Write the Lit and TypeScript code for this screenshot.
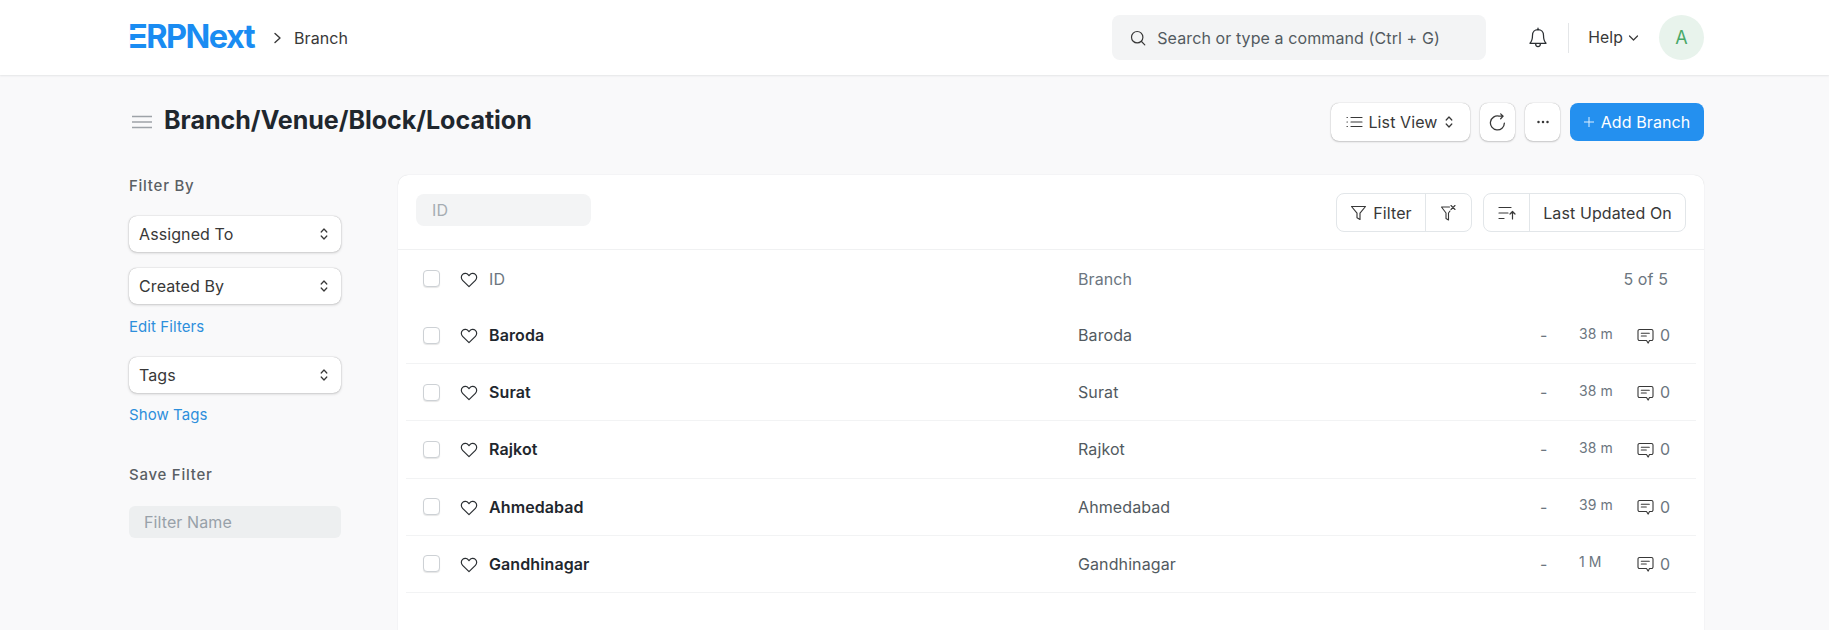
import { LitElement, html, css } from "lit";
import { customElement } from "lit/decorators.js";

const updown = html`<svg class="ud" width="12" height="16" viewBox="0 0 12 16" fill="none" stroke="#383838" stroke-width="1.25" stroke-linecap="round" stroke-linejoin="round"><path d="M3.2 6 6 3 8.800 6M3.200 10 6 13 8.800 10"/></svg>`;
const heart = html`<svg class="heart" width="18" height="16" viewBox="0 0 18 16" fill="none" stroke="#2b2f33" stroke-width="1.2" stroke-linejoin="round"><path d="M9 14.6 2.6 8.4C.9 6.7.9 4 2.6 2.4c1.7-1.5 4.3-1.3 5.7.4l.7.9.7-.9c1.4-1.7 4-1.9 5.7-.4 1.7 1.600 1.700 4.300 0 6z"/></svg>`;
const comment = html`<svg class="cicon" width="17" height="17" viewBox="0 0 17 17" fill="none" stroke="#383838" stroke-width="1.1" stroke-linejoin="round" stroke-linecap="round"><path d="M2.500 1.500h12a1.500 1.500 0 0 1 1.500 1.500v8a1.500 1.500 0 0 1-1.500 1.500h-2l-1.300 2.600-1.700-2.600h-7A1.500 1.500 0 0 1 1 11V3a1.500 1.500 0 0 1 1.500-1.500z"/><path d="M4.300 5.300h8M4.300 8h5"/></svg>`;

const rows = [
  ["Baroda", "38 m"],
  ["Surat", "38 m"],
  ["Rajkot", "38 m"],
  ["Ahmedabad", "39 m"],
  ["Gandhinagar", "1 M"],
];

@customElement("app-root")
export class AppRoot extends LitElement {
  static styles = css`
    :host { display: block; height: 630px; overflow: hidden; background: #f9f9fa; font-family: Inter, "Liberation Sans", sans-serif; font-size: 16px; letter-spacing: .1px; color: #383838; }
    * { box-sizing: border-box; }
    svg { display: block; flex: none; }
    .nav { height: 75px; background: #fff; box-shadow: 0 1px 2px rgba(25,39,52,.08), 0 0 1px rgba(25,39,52,.08); display: flex; align-items: center; padding: 0 125px 0 128px; }
    .logo { position: relative; font-size: 32.5px; font-weight: 700; color: #1a8cf2; letter-spacing: -1.55px; line-height: 1; width: 127px; }
    .logo::before, .logo::after { content: ""; position: absolute; left: 2px; width: 6px; height: 4px; background: #fff; }
    .logo::before { top: 9px; }
    .logo::after { top: 18.5px; }
    .crumb-arrow { margin-left: 18px; margin-right: 12px; }
    .spacer { flex: 1; }
    .search { width: 374px; height: 45px; background: #f3f4f5; border-radius: 8px; display: flex; align-items: center; padding-left: 18px; gap: 11px; color: #525a60; }
    .bell { margin-left: 42px; }
    .divider { width: 1px; height: 30px; background: #e4e6e8; margin: 0 19px 0 20px; }
    .help { display: flex; align-items: center; gap: 5px; color: #383838; font-size: 15.75px; }
    .avatar { width: 45px; height: 45px; border-radius: 50%; background: #e8f3ec; color: #48a868; font-size: 18px; display: flex; align-items: center; justify-content: center; margin-left: 20px; }

    .head { display: flex; align-items: center; height: 38px; margin: 28px 125px 0 132px; }
    .title { font-size: 25.1px; font-weight: 700; color: #1f272e; margin-left: 12px; padding-bottom: 3px; line-height: 1; letter-spacing: -.05px; }
    .btn { height: 38px; background: #fff; border-radius: 8px; box-shadow: 0 0 1px rgba(0,0,0,.35), 0 1px 2px rgba(0,0,0,.18); display: flex; align-items: center; justify-content: center; color: #383838; }
    .list-view { width: 139px; gap: 5px; }
    .icon-btn { width: 35px; margin-left: 10px; }
    .primary { width: 134px; margin-left: 10px; background: #2490ef; color: #fff; gap: 7px; box-shadow: none; }

    .main { display: flex; margin: 34px 125px 0 129px; align-items: flex-start; }
    .side { width: 212px; margin-right: 57px; flex: none; padding-top: 1px; }
    .side-label { font-size: 15px; font-weight: 500; letter-spacing: .75px; color: #5a5f64; line-height: 20px; }
    .sel { height: 35.5px; width: 212px; background: #fff; border-radius: 8px; box-shadow: 0 0 1px rgba(0,0,0,.35), 0 1px 3px rgba(0,0,0,.18); display: flex; align-items: center; justify-content: space-between; padding: 0 11px 0 10px; color: #383838; }
    .link { font-size: 15px; letter-spacing: .08px; color: #2d8fdc; line-height: 20px; }
    .fname { height: 32px; width: 212px; background: #edeff0; border-radius: 6px; display: flex; align-items: center; padding-left: 15px; color: #98a1a9; }
    .mt17 { margin-top: 16.5px; }
    .mt20 { margin-top: 20px; }
    .mt21 { margin-top: 20.5px; }
    .mt13 { margin-top: 13px; }
    .mt12 { margin-top: 12.5px; }
    .mt40 { margin-top: 40px; }
    .mt22 { margin-top: 21px; }

    .card { flex: 1; height: 520px; background: #fff; border-radius: 10px; box-shadow: 0 0 1px rgba(25,39,52,.2); }
    .toolbar { height: 75px; border-bottom: 1px solid #f0f1f2; display: flex; align-items: flex-start; padding: 18px 18px 0 18px; }
    .idin { width: 175px; height: 32px; background: #f3f4f5; border-radius: 8px; padding-left: 16px; display: flex; align-items: center; color: #a5acb2; margin-top: 1px; }
    .group { height: 39px; border: 1px solid #e2e6e9; border-radius: 8px; display: flex; align-items: center; color: #383838; }
    .g-filter { width: 136px; }
    .g-sort { width: 203px; margin-left: 11px; }
    .c-filter { width: 88px; }
    .c-sort { width: 45px; }
    .c-fill { flex: 1; }
    .cell { height: 100%; display: flex; align-items: center; justify-content: center; gap: 6px; }
    .cell + .cell { border-left: 1px solid #e2e6e9; }
    .row { height: 57.15px; margin: 0 8px; padding: 0 28px 0 17px; display: flex; align-items: center; }
    .row.body { border-bottom: 1px solid #f2f3f4; }
    .heart { margin-top: 2px; }
    .cicon { margin-top: 2px; }
    .check { width: 17px; height: 17px; border-radius: 4px; background: #fff; border: 1px solid #cdd1d5; box-shadow: 0 1px 1px rgba(0,0,0,.1); margin-right: 20px; flex: none; }
    .name { width: 589px; margin-left: 11px; color: #1f272e; font-weight: 600; }
    .row.hd .name { font-weight: 400; color: #6c7680; }
    .col2 { color: #525a60; }
    .row.hd .col2 { color: #6c7680; }
    .count { margin-left: auto; color: #6c7680; }
    .dash { margin-left: auto; width: 39px; color: #6c7680; }
    .age { width: 58px; font-size: 14px; color: #6c7680; margin-bottom: 4px; }
    .cmt { display: flex; align-items: center; gap: 6px; color: #6c7680; width: 31px; }
  `;

  render() {
    return html`
      <div class="nav">
        <div class="logo">ERPNext</div>
        <svg class="crumb-arrow" width="9" height="14" viewBox="0 0 9 14" fill="none" stroke="#383838" stroke-width="1.4" stroke-linecap="round" stroke-linejoin="round"><path d="M2 2.500 7 7l-5 4.500"/></svg>
        <span>Branch</span>
        <div class="spacer"></div>
        <div class="search">
          <svg width="16" height="16" viewBox="0 0 16 16" fill="none" stroke="#383838" stroke-width="1.2" stroke-linecap="round"><circle cx="7.200" cy="7.200" r="5.700"/><path d="m11.500 11.500 3.300 3.300"/></svg>
          <span>Search or type a command (Ctrl + G)</span>
        </div>
        <svg class="bell" width="20" height="22" viewBox="0 0 20 22" fill="none" stroke="#2b2f33" stroke-width="1.25" stroke-linejoin="round" stroke-linecap="round"><path d="M10 2.600c-3.300 0-5.500 2.500-5.500 5.700 0 4.400-.6 6-2.500 8h16c-1.900-2-2.500-3.600-2.500-8 0-3.200-2.200-5.700-5.500-5.700zM10 1v1.600M7.600 16.500c0 1.900 1 3.200 2.400 3.200s2.400-1.300 2.400-3.200"/></svg>
        <div class="divider"></div>
        <div class="help">Help <svg width="11" height="8" viewBox="0 0 11 8" fill="none" stroke="#383838" stroke-width="1.2" stroke-linecap="round" stroke-linejoin="round"><path d="M1.500 2 5.500 6 9.500 2"/></svg></div>
        <div class="avatar">A</div>
      </div>

      <div class="head">
        <svg width="20" height="14" viewBox="0 0 20 14" stroke="#9ea3a8" stroke-width="1.7"><path d="M0 1.500h20M0 7h20M0 12.500h20"/></svg>
        <div class="title">Branch/Venue/Block/Location</div>
        <div class="spacer"></div>
        <div class="btn list-view">
          <svg width="17" height="14" viewBox="0 0 17 14" fill="none" stroke="#383838" stroke-width="1.15" stroke-linecap="round"><path d="M5 2.500h11M5 7h11M5 11.500h11M1 2.500h.4M1 7h.4M1 11.500h.4"/></svg>
          <span>List View</span>${updown}
        </div>
        <div class="btn icon-btn"><svg width="17" height="18" viewBox="0 0 16 17" fill="none" stroke="#383838" stroke-width="1.2" stroke-linecap="round" stroke-linejoin="round"><path d="M14.500 9.500A6.600 6.600 0 1 1 9.500 3H13M11 .8 13.300 3 11 5.400"/></svg></div>
        <div class="btn icon-btn"><svg width="12" height="4" viewBox="0 0 12 4" fill="#383838"><circle cx="1.500" cy="2" r="1.250"/><circle cx="6" cy="2" r="1.250"/><circle cx="10.500" cy="2" r="1.250"/></svg></div>
        <div class="btn primary">
          <svg width="10" height="10" viewBox="0 0 10 10" stroke="#dff0ff" stroke-width="1"><path d="M5 0v10M0 5h10"/></svg>
          <span>Add Branch</span>
        </div>
      </div>

      <div class="main">
        <div class="side">
          <div class="side-label">Filter By</div>
          <div class="sel mt20">Assigned To ${updown}</div>
          <div class="sel mt17">Created By ${updown}</div>
          <div class="link mt13">Edit Filters</div>
          <div class="sel mt21">Tags ${updown}</div>
          <div class="link mt12">Show Tags</div>
          <div class="side-label mt40">Save Filter</div>
          <div class="fname mt22">Filter Name</div>
        </div>
        <div class="card">
          <div class="toolbar">
            <div class="idin">ID</div>
            <div class="spacer"></div>
            <div class="group g-filter">
              <div class="cell c-filter">
                <svg width="17" height="16" viewBox="0 0 17 16" fill="none" stroke="#383838" stroke-width="1.15" stroke-linejoin="round"><path d="M1.500 1.500h14L10 8.200v6.300l-3-1.800V8.200z"/></svg>
                Filter
              </div>
              <div class="cell c-fill">
                <svg width="17" height="17" viewBox="0 0 17 17" fill="none" stroke="#383838" stroke-width="1.1" stroke-linejoin="round" stroke-linecap="round"><path d="M9.500 3H1.500L6 9v5.500l2.500 1.500V9l1.500-2M11 1.500l4 4M15 1.500l-4 4"/></svg>
              </div>
            </div>
            <div class="group g-sort">
              <div class="cell c-sort">
                <svg width="18" height="14" viewBox="0 0 18 14" fill="none" stroke="#383838" stroke-width="1.2" stroke-linecap="round" stroke-linejoin="round"><path d="M1 1.500h12M1 7h9M1 12.500h5M14.500 13V5.500M12 8l2.500-2.500L17 8"/></svg>
              </div>
              <div class="cell c-fill">Last Updated On</div>
            </div>
          </div>
          <div class="row hd">
            <div class="check"></div>${heart}
            <div class="name">ID</div>
            <div class="col2">Branch</div>
            <div class="count">5 of 5</div>
          </div>
          ${rows.map(([n, a]) => html`
            <div class="row body">
              <div class="check"></div>${heart}
              <div class="name">${n}</div>
              <div class="col2">${n}</div>
              <div class="dash">-</div>
              <div class="age">${a}</div>
              <div class="cmt">${comment}<span>0</span></div>
            </div>`)}
        </div>
      </div>
    `;
  }
}
